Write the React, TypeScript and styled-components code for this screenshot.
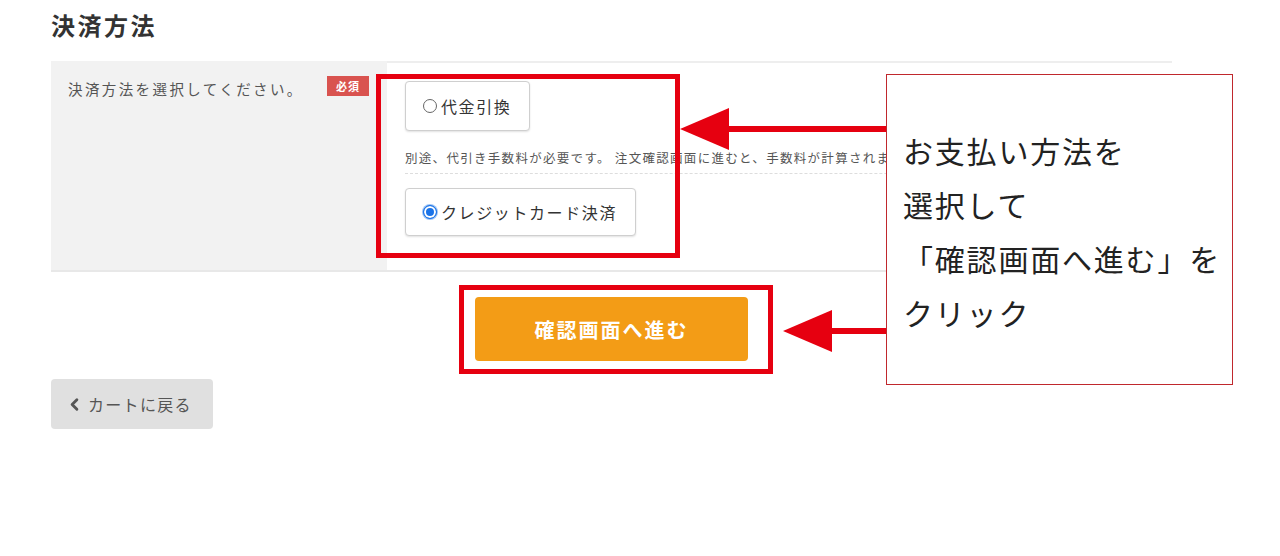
import React from "react";
import styled, { createGlobalStyle } from "styled-components";
import { ChevronLeft } from "lucide-react";

const GlobalStyle = createGlobalStyle`
  html, body { margin: 0; padding: 0; background: #fff; }
  body {
    font-family: "Noto Sans CJK JP", "Noto Sans", sans-serif;
    color: #333;
  }
  * { box-sizing: border-box; }
`;

const Page = styled.div`
  position: relative;
  width: 1280px;
  height: 556px;
  padding-left: 51px;
  overflow: hidden;
`;

const Content = styled.div`
  width: 1121px;
`;

const Title = styled.h2`
  margin: 7px 0 0;
  font-size: 24px;
  line-height: 36px;
  font-weight: 700;
  letter-spacing: 2.5px;
  color: #333;
`;

const Table = styled.div`
  margin-top: 18px;
  display: grid;
  grid-template-columns: 336px 1fr;
  border-bottom: 2px solid #e8e8e8;
`;

const LabelCell = styled.div`
  background: #f2f2f2;
  display: flex;
  justify-content: space-between;
  align-items: flex-start;
  padding: 18px 18px 0 17px;
`;

const Label = styled.span`
  font-size: 14.5px;
  line-height: 20px;
  letter-spacing: 2.4px;
  color: #555;
`;

const Badge = styled.span`
  margin-top: -3px;
  width: 42px;
  height: 20px;
  background: #d9534f;
  color: #fff;
  font-size: 11px;
  font-weight: 700;
  line-height: 20px;
  text-align: center;
  letter-spacing: 1px;
`;

const FieldCell = styled.div`
  border-top: 2px solid #eeeeee;
  padding: 18px 0 34px 18px;
  overflow: hidden;
`;

const OptionButton = styled.div<{ $height: number }>`
  display: inline-flex;
  align-items: center;
  height: ${(p) => p.$height}px;
  padding: 0 18px 0 17px;
  border: 1px solid #cfcfcf;
  border-radius: 4px;
  background: #fff;
  box-shadow: 0 1px 2px rgba(0, 0, 0, 0.12);
  font-size: 16px;
  letter-spacing: 1.6px;
  color: #333;
`;

const RadioMark = styled.span<{ $checked?: boolean }>`
  width: 14px;
  height: 14px;
  margin-right: 4px;
  border-radius: 50%;
  flex: none;
  border: 1px solid ${(p) => (p.$checked ? "#1a73e8" : "#666")};
  background: ${(p) => (p.$checked ? "#1a73e8" : "#fff")};
  box-shadow: ${(p) => (p.$checked ? "inset 0 0 0 2px #fff, 0 0 0 1px #9cc3f5" : "none")};
`;

const Note = styled.p`
  margin: 17px 0 0;
  font-size: 12.5px;
  line-height: 20px;
  letter-spacing: 1.3px;
  color: #555;
  white-space: nowrap;
`;

const Divider = styled.div`
  margin: 5px 0 14px;
  border-top: 1px dashed #ddd;
`;

const SubmitRow = styled.div`
  margin-top: 25px;
  display: flex;
  justify-content: center;
`;

const SubmitWrap = styled.div`
  position: relative;
`;

const SubmitButton = styled.button`
  width: 273px;
  height: 64px;
  border: none;
  border-radius: 4px;
  background: #f39c16;
  color: #fff;
  font-family: inherit;
  font-size: 20px;
  font-weight: 700;
  letter-spacing: 2px;
  cursor: pointer;
`;

const SubmitHighlight = styled.div`
  position: absolute;
  top: -12px;
  left: -16px;
  right: -25px;
  bottom: -13px;
  border: 5px solid #e60010;
  pointer-events: none;
`;

const BackButton = styled.button`
  margin-top: 18px;
  width: 162px;
  height: 50px;
  display: flex;
  align-items: center;
  gap: 4px;
  padding: 0 0 0 14px;
  border: none;
  border-radius: 4px;
  background: #e0e0e0;
  color: #555;
  font-family: inherit;
  font-size: 16px;
  letter-spacing: 1.3px;
`;

const OptionHighlight = styled.div`
  position: absolute;
  left: 376px;
  top: 74px;
  width: 304px;
  height: 184px;
  border: 5px solid #e60010;
  pointer-events: none;
`;

const ArrowSvg = styled.svg<{ $left: number; $top: number }>`
  position: absolute;
  left: ${(p) => p.$left}px;
  top: ${(p) => p.$top}px;
`;

const Callout = styled.div`
  position: absolute;
  left: 886px;
  top: 74px;
  width: 347px;
  height: 311px;
  border: 1px solid #c0282d;
  background: #fff;
  padding: 48px 0 0 16px;
  font-size: 30px;
  line-height: 54px;
  letter-spacing: 1.8px;
  color: #222;
  white-space: nowrap;
`;

const Arrow: React.FC<{ left: number; top: number; width: number }> = ({ left, top, width }) => (
  <ArrowSvg $left={left} $top={top} width={width} height={46} viewBox={`0 0 ${width} 46`}>
    <rect x={48} y={20} width={width - 48} height={6} fill="#e60010" />
    <polygon points="0,23 49,2 49,44" fill="#e60010" />
  </ArrowSvg>
);

export default function App() {
  return (
    <>
      <GlobalStyle />
      <Page>
        <Content>
          <Title>決済方法</Title>
          <Table>
            <LabelCell>
              <Label>決済方法を選択してください。</Label>
              <Badge>必須</Badge>
            </LabelCell>
            <FieldCell>
              <OptionButton $height={50}>
                <RadioMark />
                代金引換
              </OptionButton>
              <Note>
                別途、代引き手数料が必要です。 注文確認画面に進むと、手数料が計算されます。
              </Note>
              <Divider />
              <OptionButton $height={48}>
                <RadioMark $checked />
                クレジットカード決済
              </OptionButton>
            </FieldCell>
          </Table>
          <SubmitRow>
            <SubmitWrap>
              <SubmitButton>確認画面へ進む</SubmitButton>
              <SubmitHighlight />
            </SubmitWrap>
          </SubmitRow>
          <BackButton>
            <ChevronLeft size={19} strokeWidth={3.6} />
            カートに戻る
          </BackButton>
        </Content>
        <OptionHighlight />
        <Arrow left={680} top={106} width={206} />
        <Arrow left={783} top={308} width={103} />
        <Callout>
          お支払い方法を
          <br />
          選択して
          <br />
          「確認画面へ進む」を
          <br />
          クリック
        </Callout>
      </Page>
    </>
  );
}
